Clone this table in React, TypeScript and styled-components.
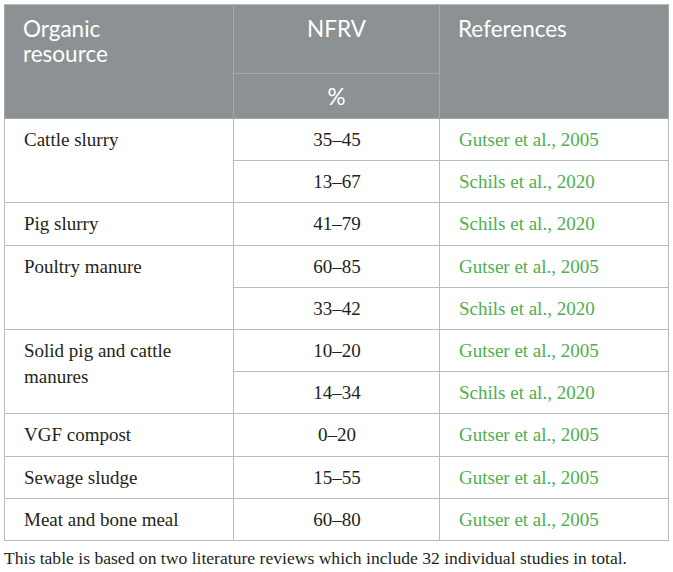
import React from 'react'
import styled, { createGlobalStyle } from 'styled-components'

const GlobalStyle = createGlobalStyle`
  body {
    margin: 0;
    background: #ffffff;
  }
`

const Page = styled.div`
  padding: 4px;
  width: 664px;
`

const Table = styled.table`
  width: 664px;
  border-collapse: collapse;
  table-layout: fixed;
  border: 1px solid #b9bcbc;
`

const HeadCell = styled.th<{ align?: 'left' | 'center' }>`
  background: #8c9193;
  color: #ffffff;
  font-family: Lato, 'Open Sans', sans-serif;
  font-weight: 400;
  font-size: 22.5px;
  line-height: 25px;
  text-align: ${({ align }) => align ?? 'left'};
  vertical-align: top;
  padding: 11px 18px 8px 18px;
  border: 1px solid #a4a8a9;
  border-top-color: #b9bcbc;
`

const UnitCell = styled(HeadCell)`
  padding: 10px 18px 9px 18px;
  vertical-align: middle;
`

const Cell = styled.td<{ align?: 'left' | 'center' }>`
  font-family: 'Liberation Serif', 'Times New Roman', serif;
  font-size: 19px;
  line-height: 26px;
  color: #231f20;
  text-align: ${({ align }) => align ?? 'left'};
  vertical-align: top;
  padding: 8px 18px 7.2px 19px;
  border: 1px solid #b9bcbc;
`

const Ref = styled.span`
  color: #4daf4f;
`

const Note = styled.p`
  margin: 6px 0 0 0;
  font-family: 'Liberation Serif', 'Times New Roman', serif;
  font-size: 17.6px;
  line-height: 22px;
  color: #231f20;
  white-space: nowrap;
`

type Group = { resource: string; values: [string, string][] }

const groups: Group[] = [
  {
    resource: 'Cattle slurry',
    values: [
      ['35–45', 'Gutser et al., 2005'],
      ['13–67', 'Schils et al., 2020']
    ]
  },
  { resource: 'Pig slurry', values: [['41–79', 'Schils et al., 2020']] },
  {
    resource: 'Poultry manure',
    values: [
      ['60–85', 'Gutser et al., 2005'],
      ['33–42', 'Schils et al., 2020']
    ]
  },
  {
    resource: 'Solid pig and cattle manures',
    values: [
      ['10–20', 'Gutser et al., 2005'],
      ['14–34', 'Schils et al., 2020']
    ]
  },
  { resource: 'VGF compost', values: [['0–20', 'Gutser et al., 2005']] },
  { resource: 'Sewage sludge', values: [['15–55', 'Gutser et al., 2005']] },
  { resource: 'Meat and bone meal', values: [['60–80', 'Gutser et al., 2005']] }
]

const App: React.FC = () => {
  return (
    <Page>
      <GlobalStyle />
      <Table>
        <colgroup>
          <col style={{ width: 229 }} />
          <col style={{ width: 206 }} />
          <col style={{ width: 229 }} />
        </colgroup>
        <thead>
          <tr>
            <HeadCell rowSpan={2}>
              Organic
              <br />
              resource
            </HeadCell>
            <HeadCell align="center" style={{ height: 49 }}>
              NFRV
            </HeadCell>
            <HeadCell rowSpan={2}>References</HeadCell>
          </tr>
          <tr>
            <UnitCell align="center">%</UnitCell>
          </tr>
        </thead>
        <tbody>
          {groups.map(group =>
            group.values.map(([value, ref], i) => (
              <tr key={group.resource + i}>
                {i === 0 && (
                  <Cell rowSpan={group.values.length}>{group.resource}</Cell>
                )}
                <Cell align="center">{value}</Cell>
                <Cell>
                  <Ref>{ref}</Ref>
                </Cell>
              </tr>
            ))
          )}
        </tbody>
      </Table>
      <Note>
        This table is based on two literature reviews which include 32
        individual studies in total.
      </Note>
    </Page>
  )
}

export default App
